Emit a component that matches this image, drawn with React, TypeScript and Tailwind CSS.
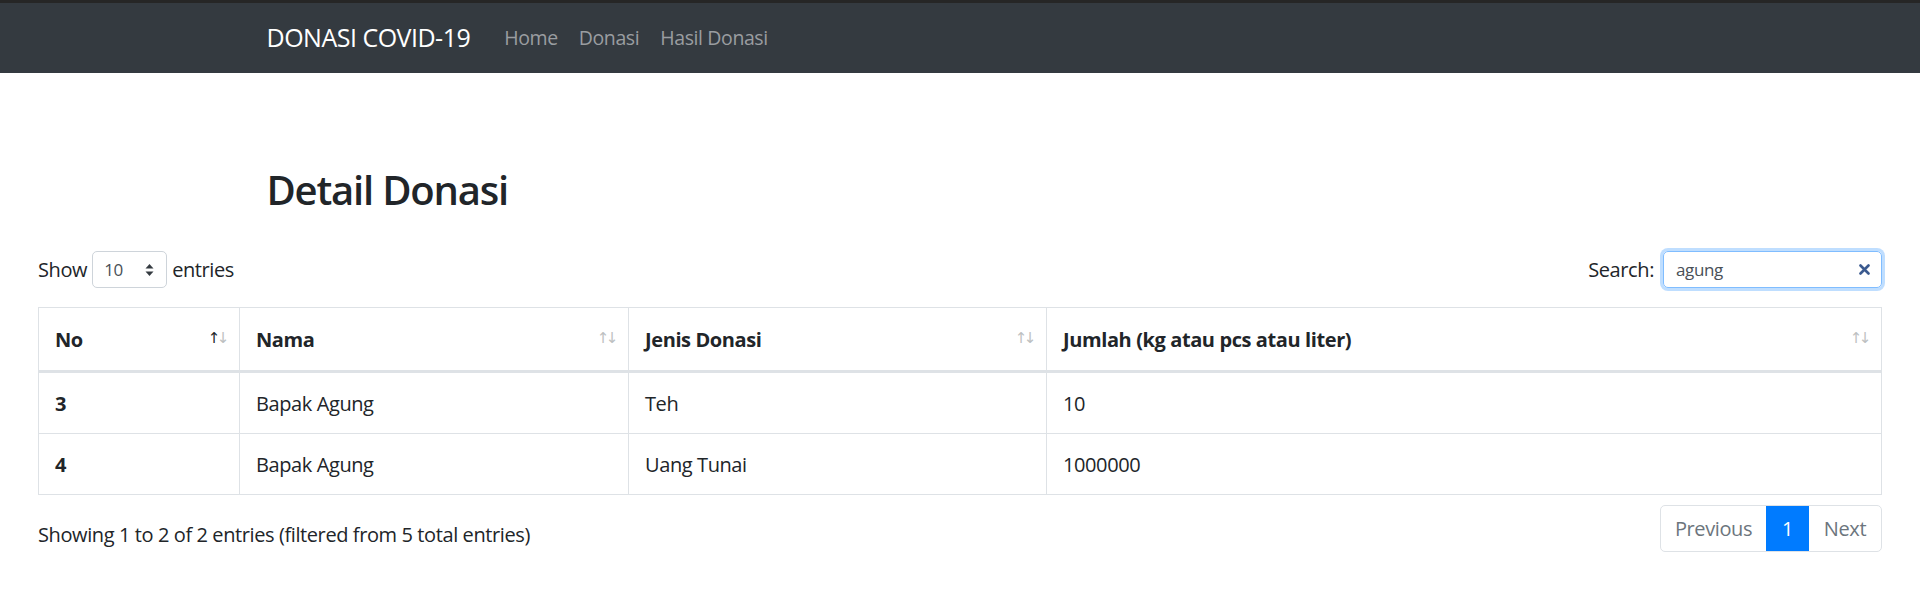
import { ReactNode } from 'react';

type Row = { no: number; nama: string; jenis: string; jumlah: string };

const rows: Row[] = [
  { no: 3, nama: 'Bapak Agung', jenis: 'Teh', jumlah: '10' },
  { no: 4, nama: 'Bapak Agung', jenis: 'Uang Tunai', jumlah: '1000000' },
];

const SortTh = ({ children, active }: { children: ReactNode; active?: boolean }) => (
  <th className="relative border-r border-[#dee2e6] last:border-r-0 border-b-[3px] border-b-[#dee2e6] pl-[16px] pr-[30px] pt-[17px] pb-[15px] text-left font-bold leading-[30px]">
    {children}
    <span
      className={`absolute right-[19px] top-[20px] text-[15px] leading-[20px] font-normal font-['DejaVu_Sans',sans-serif] ${
        active ? 'text-[#212529]' : 'text-[#bdbfc1]'
      }`}
    >
      ↑
    </span>
    <span className="absolute right-[10px] top-[20px] text-[15px] leading-[20px] font-normal font-['DejaVu_Sans',sans-serif] text-[#bdbfc1]">
      ↓
    </span>
  </th>
);

export default function App() {
  return (
    <div className="min-h-[600px] bg-white text-[#212529] text-[20px] font-['Open_Sans','Noto_Sans',sans-serif] tracking-[-0.4px]">
      {/* Navbar */}
      <nav className="h-[73px] bg-[#343a40] border-t-[3px] border-[#262626]">
        <div className="mx-auto w-[1425px] px-[19px] h-full flex items-center">
          <span className="text-white text-[25px] mr-[34px] tracking-[-0.5px]">DONASI COVID-19</span>
          <div className="flex items-center gap-[21px] text-[19.5px] text-[#9a9da0]">
            <span>Home</span>
            <span>Donasi</span>
            <span>Hasil Donasi</span>
          </div>
        </div>
      </nav>

      <div className="mx-auto w-[1425px] px-[19px] pt-[93px]">
        <h2 className="text-[40px] font-semibold leading-[48px] tracking-[-1.2px]">Detail Donasi</h2>
      </div>

      <div className="px-[38px]">
        {/* Controls */}
        <div className="flex items-center justify-between mt-[37px]">
          <div className="flex items-center">
            <span>Show</span>
            <div className="ml-[5px] mr-[5px] w-[75px] h-[37px] border border-[#ced4da] rounded-[5px] flex items-center justify-between pl-[11px] pr-[12px] text-[17px] text-[#495057]">
              <span>10</span>
              <svg width="9" height="14" viewBox="0 0 9 14">
                <path d="M4.5 1 L8.5 5.5 H0.5 Z" fill="#343a40" />
                <path d="M4.5 13 L8.5 8.5 H0.5 Z" fill="#343a40" />
              </svg>
            </div>
            <span>entries</span>
          </div>
          <div className="flex items-center">
            <span className="mr-[9px]">Search:</span>
            <div className="w-[219px] h-[37px] border border-[#80bdff] rounded-[5px] shadow-[0_0_0_3px_rgba(0,123,255,0.25)] flex items-center justify-between pl-[12px] pr-[11px] text-[17px] text-[#495057]">
              <span>agung</span>
              <svg width="11" height="11" viewBox="0 0 11 11">
                <path d="M1.5 1.5 L9.5 9.5 M9.5 1.5 L1.5 9.5" stroke="#3b5a8f" strokeWidth="2.6" strokeLinecap="round" />
              </svg>
            </div>
          </div>
        </div>

        {/* Table */}
        <table className="mt-[19px] w-full table-fixed border-collapse border border-[#dee2e6]">
          <colgroup>
            <col className="w-[201px]" />
            <col className="w-[389px]" />
            <col className="w-[418px]" />
            <col />
          </colgroup>
          <thead>
            <tr className="border-t border-[#dee2e6]">
              <SortTh active>No</SortTh>
              <SortTh>Nama</SortTh>
              <SortTh>Jenis Donasi</SortTh>
              <SortTh>Jumlah (kg atau pcs atau liter)</SortTh>
            </tr>
          </thead>
          <tbody>
            {rows.map((r) => (
              <tr key={r.no} className="border-b border-[#dee2e6]">
                <td className="border-r border-[#dee2e6] pl-[16px] pt-[16px] pb-[14px] leading-[30px] font-bold">{r.no}</td>
                <td className="border-r border-[#dee2e6] pl-[16px] pt-[16px] pb-[14px] leading-[30px]">{r.nama}</td>
                <td className="border-r border-[#dee2e6] pl-[16px] pt-[16px] pb-[14px] leading-[30px]">{r.jenis}</td>
                <td className="pl-[16px] pt-[16px] pb-[14px] leading-[30px]">{r.jumlah}</td>
              </tr>
            ))}
          </tbody>
        </table>

        {/* Footer */}
        <div className="flex items-center justify-between mt-[10px]">
          <span className="mt-[12px]">Showing 1 to 2 of 2 entries (filtered from 5 total entries)</span>
          <div className="flex h-[47px] border border-[#dee2e6] rounded-[5px] overflow-hidden text-[#6c757d]">
            <span className="w-[105px] flex items-center justify-center">Previous</span>
            <span className="w-[43px] flex items-center justify-center bg-[#007bff] text-white">1</span>
            <span className="w-[72px] flex items-center justify-center">Next</span>
          </div>
        </div>
      </div>
    </div>
  );
}
